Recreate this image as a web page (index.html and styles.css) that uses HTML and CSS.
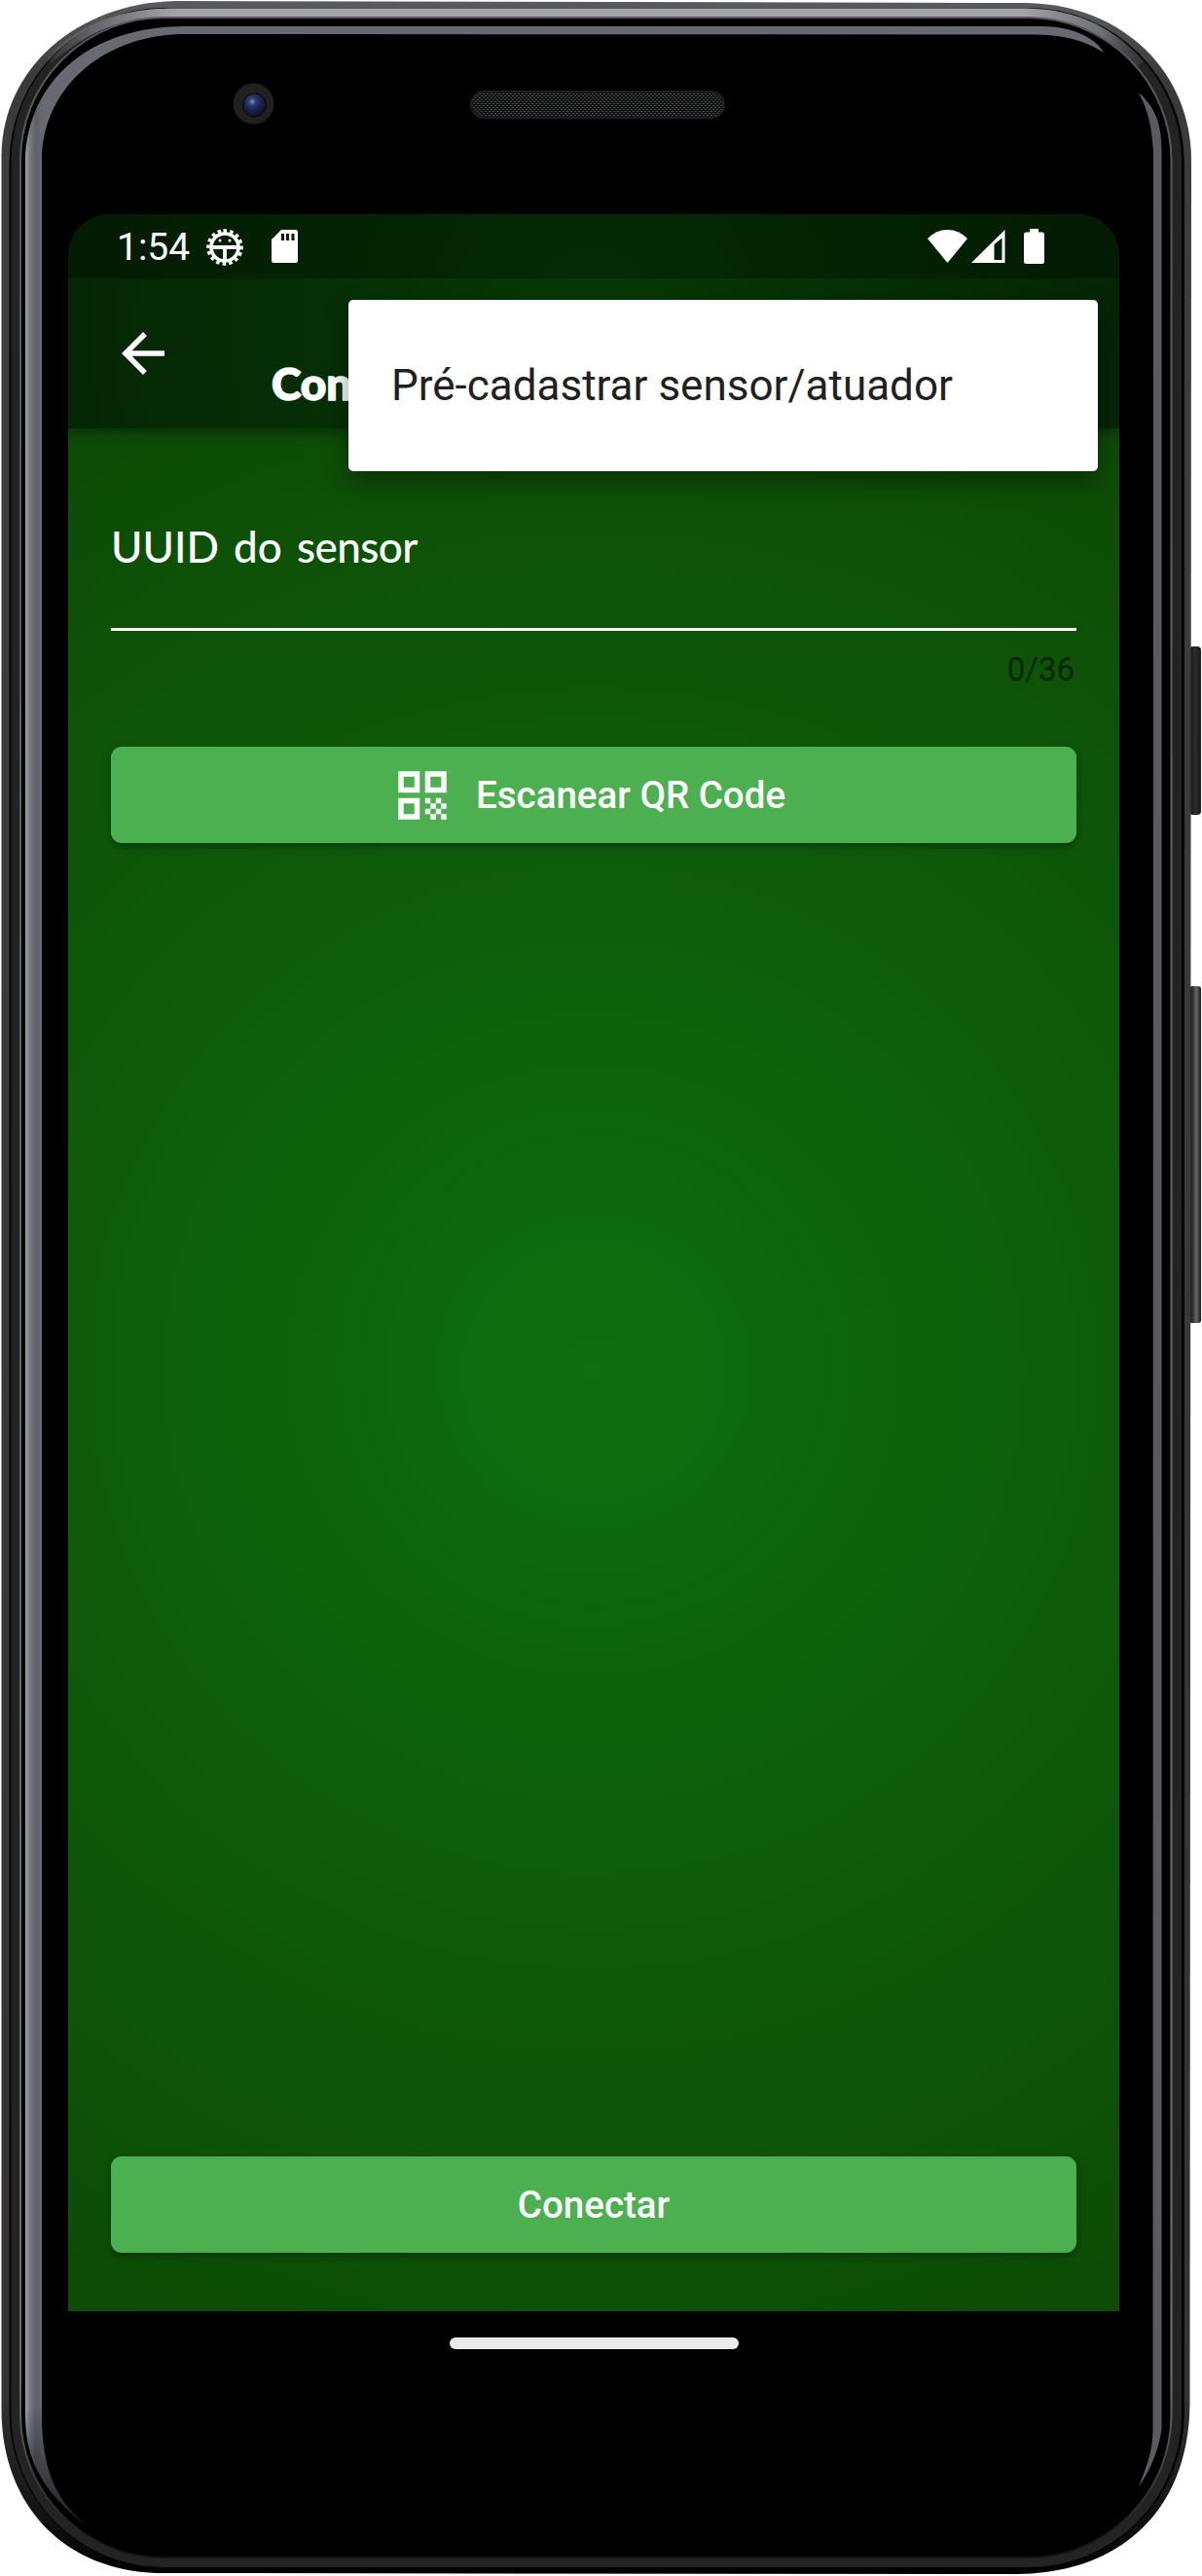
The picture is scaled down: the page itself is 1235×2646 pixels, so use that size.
FILE: index.html
```html
<!DOCTYPE html>
<html lang="pt-BR">
<head>
<meta charset="utf-8">
<title>Conectar sensor</title>
<link rel="stylesheet" href="styles.css">
</head>
<body>
<div class="device">
  <svg class="device-frame" width="1235" height="2646" viewBox="0 0 1235 2646" aria-hidden="true">
    <defs>
      <linearGradient id="shell" x1="0" y1="0" x2="0" y2="1">
        <stop offset="0" stop-color="#5b5b5c"/><stop offset=".03" stop-color="#3b3939"/><stop offset=".1" stop-color="#3f3d3e"/><stop offset=".93" stop-color="#353233"/><stop offset=".975" stop-color="#151415"/><stop offset="1" stop-color="#000"/>
      </linearGradient>
      <linearGradient id="fade" gradientUnits="userSpaceOnUse" x1="40" y1="0" x2="1190" y2="0">
        <stop offset="0" stop-color="#777a80" stop-opacity="0"/><stop offset=".05" stop-color="#777a80" stop-opacity=".8"/><stop offset=".12" stop-color="#a2a3a8"/><stop offset=".88" stop-color="#a2a3a8"/><stop offset=".95" stop-color="#808388" stop-opacity=".8"/><stop offset="1" stop-color="#555" stop-opacity="0"/>
      </linearGradient>
      <linearGradient id="glassL" gradientUnits="userSpaceOnUse" x1="26" y1="0" x2="44" y2="0">
        <stop offset="0" stop-color="#a2a2a2"/><stop offset=".25" stop-color="#777b82"/><stop offset=".6" stop-color="#5d6269"/><stop offset="1" stop-color="#686a72"/>
      </linearGradient>
      <linearGradient id="glassTail" gradientUnits="userSpaceOnUse" x1="0" y1="2470" x2="0" y2="2593">
        <stop offset="0" stop-color="#000" stop-opacity="0"/><stop offset="1" stop-color="#000" stop-opacity=".7"/>
      </linearGradient>
      <linearGradient id="rim" x1="0" y1="0" x2="0" y2="1">
        <stop offset="0" stop-color="#55565a"/><stop offset=".93" stop-color="#707070"/><stop offset=".975" stop-color="#333"/><stop offset="1" stop-color="#111"/>
      </linearGradient>
      <linearGradient id="rocker" x1="0" x2="1" y1="0" y2="0">
        <stop offset="0" stop-color="#111"/><stop offset=".3" stop-color="#333"/><stop offset=".6" stop-color="#686868"/><stop offset="1" stop-color="#181818"/>
      </linearGradient>
      <linearGradient id="power" x1="0" x2="1" y1="0" y2="0">
        <stop offset="0" stop-color="#111"/><stop offset=".5" stop-color="#2d2d2d"/><stop offset="1" stop-color="#191919"/>
      </linearGradient>
      <radialGradient id="lens" cx=".4" cy=".35" r=".65">
        <stop offset="0" stop-color="#8090bd"/><stop offset=".25" stop-color="#2c3a70"/><stop offset=".6" stop-color="#17224c"/><stop offset="1" stop-color="#10131c"/>
      </radialGradient>
      <pattern id="mesh" width="4" height="4" patternUnits="userSpaceOnUse">
        <rect width="4" height="4" fill="#121313"/><rect width="2" height="1" x="0" y="0" fill="#484a49"/><rect width="2" height="1" x="2" y="2" fill="#484a49"/>
      </pattern>
      <clipPath id="tailClip"><path d="M87 2593C46 2560 26 2530 26 2480V2470H43V2490C45 2540 58 2568 87 2593Z"/></clipPath>
    </defs>
    <rect x="1222" y="664" width="12" height="173" rx="4" fill="url(#power)"/>
    <rect x="1222" y="1013" width="12" height="346" rx="3" fill="url(#rocker)"/>
    <path fill="url(#shell)" d="M180 1L1055 3C1155 5 1224 75 1224 165L1222.500 2470C1221 2580 1150 2643 1045 2644L160 2643C62 2639 1.500 2570 1.500 2475L1.500 160C2 70 80 3 180 1Z"/>
    <rect x="9.500" y="8" width="1207.500" height="2630" rx="160" fill="#050505"/>
    <rect x="11.500" y="9" width="1202.500" height="2628" rx="157" fill="#232323"/>
    <path fill="none" stroke="url(#fade)" stroke-width="9" d="M50 62C90 25 130 13 175 13H1055C1110 14 1145 36 1172 66"/>
    <rect x="21" y="18" width="1182.500" height="2609" rx="147" fill="#000" stroke="url(#rim)" stroke-width="2"/>
    <path fill="url(#glassL)" d="M87 2593C46 2560 26 2530 26 2480V165C28 85 90 27 190 27H1070C1100 27 1125 38 1134 54C1112 40 1090 35.500 1060 35.500L185 35C100 38 43 95 43 165V2490C45 2540 58 2568 87 2593Z"/>
    <path fill="url(#glassTail)" d="M20 2470H90V2600H20Z" clip-path="url(#tailClip)"/>
    <path fill="#5a5b60" d="M1169.500 95C1188 110 1193.500 130 1193.500 155V2495C1190 2520 1180 2540 1169.500 2555C1180 2530 1184.500 2515 1184.500 2495L1185 155C1183 125 1178 110 1169.500 95Z"/>
    <circle cx="260.500" cy="106.500" r="21" fill="#202021"/>
    <circle cx="261.500" cy="108" r="12" fill="url(#lens)" stroke="#060606" stroke-width="1"/>
    <rect x="484" y="94" width="260" height="27" rx="13.500" fill="url(#mesh)" stroke="#1d1e24" stroke-width="2"/>
  </svg>

  <main class="screen">
    <header class="top">
      <div class="status-bar">
        <span class="clock">1:54</span>
        <svg class="debug-icon" width="40" height="40" viewBox="-20 -20 40 40">
          <circle r="14" fill="none" stroke="#fff" stroke-width="3.600"/>
          <circle r="16.800" fill="none" stroke="#fff" stroke-width="4" stroke-dasharray="3.500 3.097" transform="rotate(-95)"/>
          <path d="M-14 0H14M0 0V14" stroke="#fff" stroke-width="3.800"/>
          <circle cx="-5" cy="-7" r="1.500" fill="#fff"/><circle cx="5" cy="-7" r="1.500" fill="#fff"/>
        </svg>
        <svg class="sd-icon" width="27" height="34" viewBox="0 0 27 34"><path fill="#fff" fill-rule="evenodd" d="M10 0H24.500Q27 0 27 2.500V31.500Q27 34 24.500 34H2.500Q0 34 0 31.500V10ZM10 4V11H13V4ZM15 4V11H18V4ZM20.500 4V11H23.500V4Z"/></svg>
        <svg class="wifi-icon" width="41" height="34" viewBox="0 0 41 34"><path fill="#fff" d="M0 9Q9 0 20.500 0T41 9L20.500 34Z"/></svg>
        <svg class="signal-icon" width="35" height="34" viewBox="0 0 35 34"><path fill="#fff" fill-rule="evenodd" d="M0 34L34.500 0V34ZM23.500 15V31H31.500V8.500Z"/></svg>
        <svg class="battery-icon" width="21" height="36" viewBox="0 0 21 36"><path fill="#fff" d="M6 0H15V3.500H18.500Q21 3.500 21 6V33.500Q21 36 18.500 36H2.500Q0 36 0 33.500V6Q0 3.500 2.500 3.500H6Z"/></svg>
      </div>
      <div class="app-bar">
        <svg class="back-icon" width="66" height="66" viewBox="0 0 24 24"><path fill="#fff" d="M20 11H7.830l5.590-5.590L12 4l-8 8 8 8 1.410-1.410L7.830 13H20v-2z"/></svg>
        <h1 class="title">Con</h1>
      </div>
    </header>

    <section class="content">
      <div class="field">
        <label class="label"><span class="w1">UUID</span><span class="w2">do</span><span class="w3">sensor</span></label>
      </div>
      <div class="counter">0/36</div>
      <button class="btn scan">
        <svg width="66" height="66" viewBox="0 0 24 24"><path fill="#fff" fill-rule="evenodd" d="M3 11h8V3H3v8zm2-6h4v4H5V5zM3 21h8v-8H3v8zm2-6h4v4H5v-4zM13 3v8h8V3h-8zm6 6h-4V5h4v4zM13 13h2v2h-2zM17 13h2v2h-2zM15 15h2v2h-2zM19 15h2v2h-2zM13 17h2v2h-2zM17 17h2v2h-2zM15 19h2v2h-2zM19 19h2v2h-2z"/></svg>
        <span class="btn-text">Escanear QR Code</span>
      </button>
      <button class="btn connect"><span class="btn-text">Conectar</span></button>
    </section>
    <div class="nav-bar"><span class="pill"></span></div>
    <div class="menu"><span class="menu-item">Pré-cadastrar sensor/atuador</span></div>
  </main>
</div>
</body>
</html>
```
FILE: styles.css
```css
* { box-sizing: border-box; }

body {
  margin: 0;
  background: #fff;
  font-family: Roboto, "Liberation Sans", sans-serif;
  color: #fff;
}

.device {
  position: relative;
  width: 1235px;
  height: 2646px;
  padding: 220px 85px 0 70px;
  overflow: hidden;
}

.device-frame {
  position: absolute;
  inset: 0;
}

.screen {
  position: relative;
  display: flex;
  flex-direction: column;
  width: 1080px;
  height: 2220px;
  border-radius: 42px 42px 0 0;
  overflow: hidden;
}

.top {
  position: relative;
  z-index: 1;
  flex: none;
  background: radial-gradient(circle 550px at 50% 50%, #063a06, #052505);
  box-shadow: 0 4px 14px rgba(0, 0, 0, .4);
}

.status-bar {
  display: flex;
  align-items: center;
  height: 66px;
  padding: 0 77px 0 50px;
  background: rgba(0, 0, 0, .26);
}

.clock {
  width: 91px;
  padding-top: 3px;
  font-size: 39px;
  line-height: 63px;
}

.debug-icon { margin-top: 1px; }
.sd-icon { margin-left: 28px; }
.wifi-icon { margin-left: auto; }
.signal-icon { margin-left: 4px; }
.battery-icon { margin-left: 19px; }

.app-bar {
  display: flex;
  height: 154px;
  padding-left: 44px;
}

.back-icon { margin-top: 44px; }

.title {
  margin: 80px 0 0 99px;
  font: 900 46px/56px Lato, sans-serif;
  -webkit-text-stroke: 1.5px #fff;
}

.content {
  display: flex;
  flex: none;
  flex-direction: column;
  height: 1934px;
  padding: 93px 44px 60px;
  background: radial-gradient(circle 1108px at 50% 50%, #0d6f0f, #0e5b0a 50%, #0d4b06);
}

.field {
  height: 115px;
  border-bottom: 3px solid #fff;
}

.label {
  display: flex;
  font: 500 44px/56px Lato, sans-serif;
}

.w1 { width: 126px; }
.w2 { width: 65px; }
.w3 { letter-spacing: -.6px; }

.counter {
  margin-top: 20px;
  padding-right: 2px;
  font-size: 33px;
  line-height: 40px;
  text-align: right;
  color: rgba(0, 0, 0, .54);
}

.btn {
  display: flex;
  align-items: center;
  justify-content: center;
  flex: none;
  height: 99px;
  padding: 0;
  border: 0;
  border-radius: 11px;
  background: #4caf50;
  box-shadow: 0 4px 7px rgba(0, 0, 0, .32);
  color: #fff;
  font: 500 38.5px/46px Roboto, "Liberation Sans", sans-serif;
}

.btn-text { padding-top: 1px; }

.scan {
  gap: 22px;
  margin-top: 59px;
  padding-right: 12px;
}

.connect { margin-top: auto; }

.nav-bar {
  display: flex;
  justify-content: center;
  flex: none;
  height: 66px;
  padding-top: 27px;
  background: #000;
}

.pill {
  width: 297px;
  height: 12px;
  border-radius: 6px;
  background: #ebebeb;
}

.menu {
  position: absolute;
  z-index: 2;
  top: 88px;
  left: 288px;
  display: flex;
  align-items: center;
  width: 770px;
  height: 176px;
  padding-left: 44px;
  border-radius: 5px;
  background: #fff;
  box-shadow: 0 10px 26px rgba(0, 0, 0, .4);
}

.menu-item {
  font-size: 44px;
  line-height: 52px;
  color: #212121;
}
```
